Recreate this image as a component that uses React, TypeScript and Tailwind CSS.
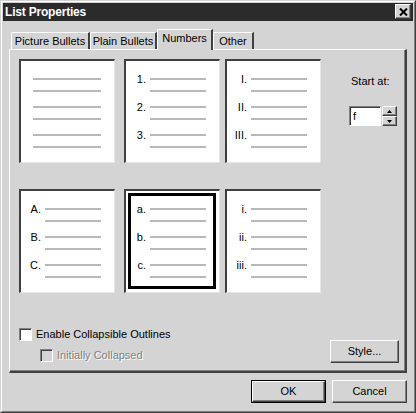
import clsx from "clsx"

const raised =
  "border border-t-white border-l-white border-r-[#404040] border-b-[#404040] shadow-[inset_-1px_-1px_0_#808080]"
const sunken =
  "border border-t-[#808080] border-l-[#808080] border-r-white border-b-white shadow-[inset_1px_1px_0_#404040]"

function Line({ w }: { w: string }) {
  return <div className={clsx("h-[2px] bg-[#b8b8b8]", w)} />
}

function Preview({ labels, selected }: { labels?: string[]; selected?: boolean }) {
  return (
    <div
      className={clsx(
        "w-[96px] h-[104px] shrink-0 bg-white border-t-2 border-l-2 border-r border-b border-t-[#404040] border-l-[#404040] border-r-[#e6e6e6] border-b-[#e6e6e6]",
        selected && "outline-3 outline-black outline-offset-[-7px]"
      )}
    >
      <div className={clsx("flex flex-col gap-[9px] pt-[12px]", !labels && "pl-[12px]")}>
        {[0, 1, 2].map((i) => (
          <div key={i} className="flex flex-col">
            <div className="flex h-[12px] items-center">
              {labels && <div className="w-[20px] text-right leading-none">{labels[i]}</div>}
              <div className={labels ? "ml-[4px]" : ""}>
                <Line w={labels ? "w-[56px]" : "w-[68px]"} />
              </div>
            </div>
            <div className={clsx("mt-[5px]", labels && "pl-[24px]")}>
              <Line w={labels ? "w-[56px]" : "w-[68px]"} />
            </div>
          </div>
        ))}
      </div>
    </div>
  )
}

function Tab({ label, w, active }: { label: string; w: string; active?: boolean }) {
  return (
    <div
      className={clsx(
        "flex items-center justify-center border-t border-l border-t-white border-l-white border-r-2 border-r-[#404040] rounded-tl-[2px] bg-[#d4d4d4]",
        w,
        active ? "h-[21px] -mb-[1px] relative z-10 pb-[3px]" : "h-[17px]"
      )}
    >
      {label}
    </div>
  )
}

function Checkbox({ disabled }: { disabled?: boolean }) {
  return <div className={clsx("w-[13px] h-[13px]", sunken, disabled ? "bg-[#d4d4d4]" : "bg-white")} />
}

function Button({ label, def, w }: { label: string; def?: boolean; w: string }) {
  const inner = (
    <div className={clsx("flex items-center justify-center bg-[#d4d4d4] h-full", raised)}>{label}</div>
  )
  return (
    <div className={clsx("h-[23px]", w, def && "border border-black")}>{inner}</div>
  )
}

export default function App() {
  return (
    <div className="w-[416px] h-[413px] bg-[#d4d4d4] border border-t-[#d4d4d4] border-l-[#d4d4d4] border-r-[#404040] border-b-[#404040] font-['Liberation_Sans',Arial,sans-serif] text-[11px] text-black select-none">
      <div className="h-full border border-t-white border-l-white border-r-[#808080] border-b-[#808080] p-px flex flex-col">
        {/* title bar */}
        <div className="h-[18px] bg-[#2b2b2b] flex items-start justify-between pl-[2px] pr-[2px]">
          <div className="text-white font-bold text-[12px] leading-[18px] tracking-[-0.2px]">List Properties</div>
          <div className={clsx("mt-px w-[16px] h-[15px] bg-[#d4d4d4] flex items-center justify-center", raised)}>
            <svg width="9" height="8" viewBox="0 0 9 8">
              <path d="M1 0.5 L8 7.5 M8 0.5 L1 7.5" stroke="#000" strokeWidth="2" />
            </svg>
          </div>
        </div>

        <div className="px-[6px] pt-[8px] flex flex-col">
          {/* tabs */}
          <div className="flex items-end h-[20px] pl-[2px]">
            <Tab label="Picture Bullets" w="w-[79px]" />
            <Tab label="Plain Bullets" w="w-[67px]" />
            <Tab label="Numbers" w="w-[56px]" active />
            <Tab label="Other" w="w-[41px]" />
          </div>

          {/* panel */}
          <div className="h-[324px] border-t border-l border-t-white border-l-white border-r-2 border-b-2 border-r-[#404040] border-b-[#404040] shadow-[inset_-1px_-1px_0_#808080] flex flex-col pl-[9px] pt-[9px]">
            <div className="flex">
              <div className="flex flex-col">
                <div className="flex">
                  <Preview />
                  <div className="ml-[9px]">
                    <Preview labels={["1.", "2.", "3."]} />
                  </div>
                  <div className="ml-[5px]">
                    <Preview labels={["I.", "II.", "III."]} />
                  </div>
                </div>
                <div className="flex mt-[26px]">
                  <Preview labels={["A.", "B.", "C."]} />
                  <div className="ml-[9px]">
                    <Preview labels={["a.", "b.", "c."]} selected />
                  </div>
                  <div className="ml-[5px]">
                    <Preview labels={["i.", "ii.", "iii."]} />
                  </div>
                </div>
              </div>

              <div className="ml-[28px] flex flex-col">
                <div className="mt-[16px] pl-[2px] leading-[13px]">Start at:</div>
                <div className="mt-[18px] flex">
                  <div className={clsx("w-[32px] h-[20px] bg-white pl-[3px] leading-[18px]", sunken)}>f</div>
                  <div className="ml-px flex flex-col w-[15px]">
                    <div className={clsx("h-[10px] flex items-center justify-center bg-[#d4d4d4]", raised)}>
                      <svg width="5" height="3" viewBox="0 0 5 3">
                        <path d="M2.5 0 L5 3 L0 3 Z" fill="#000" />
                      </svg>
                    </div>
                    <div className={clsx("h-[10px] flex items-center justify-center bg-[#d4d4d4]", raised)}>
                      <svg width="5" height="3" viewBox="0 0 5 3">
                        <path d="M0 0 L5 0 L2.5 3 Z" fill="#000" />
                      </svg>
                    </div>
                  </div>
                </div>
              </div>
            </div>

            {/* options */}
            <div className="flex justify-between items-start mt-[35px] pr-[6px]">
              <div className="flex flex-col">
                <div className="flex items-center h-[13px]">
                  <Checkbox />
                  <span className="ml-[4px]">Enable Collapsible Outlines</span>
                </div>
                <div className="flex items-center h-[13px] mt-[8px] pl-[21px]">
                  <Checkbox disabled />
                  <span className="ml-[4px] text-[#808080] [text-shadow:1px_1px_0_#fff]">Initially Collapsed</span>
                </div>
              </div>
              <div className="mt-[12px]">
                <Button label="Style..." w="w-[69px]" />
              </div>
            </div>
          </div>

          {/* buttons */}
          <div className="flex justify-end gap-[6px] mt-[7px]">
            <Button label="OK" def w="w-[75px]" />
            <Button label="Cancel" w="w-[75px]" />
          </div>
        </div>
      </div>
    </div>
  )
}
